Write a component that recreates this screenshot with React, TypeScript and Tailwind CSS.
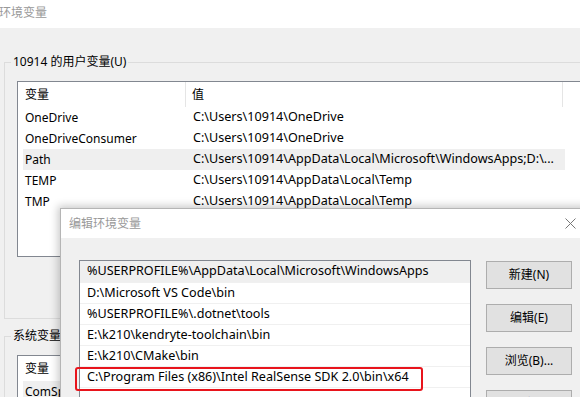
import React from 'react';

const userVars = [
  { name: 'OneDrive', value: 'C:\\Users\\10914\\OneDrive' },
  { name: 'OneDriveConsumer', value: 'C:\\Users\\10914\\OneDrive' },
  { name: 'Path', value: 'C:\\Users\\10914\\AppData\\Local\\Microsoft\\WindowsApps;D:\\...', selected: true },
  { name: 'TEMP', value: 'C:\\Users\\10914\\AppData\\Local\\Temp' },
  { name: 'TMP', value: 'C:\\Users\\10914\\AppData\\Local\\Temp' },
];

const pathItems = [
  '%USERPROFILE%\\AppData\\Local\\Microsoft\\WindowsApps',
  'D:\\Microsoft VS Code\\bin',
  '%USERPROFILE%\\.dotnet\\tools',
  'E:\\k210\\kendryte-toolchain\\bin',
  'E:\\k210\\CMake\\bin',
  'C:\\Program Files (x86)\\Intel RealSense SDK 2.0\\bin\\x64',
  '',
];

const ListHeader = () => (
  <div className="flex h-[25px] items-stretch">
    <div className="flex w-[168px] items-center border-r border-[#e5e5e5] pl-[7px]">变量</div>
    <div className="flex w-[377px] items-center border-r border-[#e5e5e5] pl-[6px]">值</div>
  </div>
);

const GroupBox = ({ label, children, className = '' }: { label: string; children: React.ReactNode; className?: string }) => (
  <fieldset className={`w-[640px] border border-[#dcdcdc] pl-[12px] pt-[11px] ${className}`}>
    <legend className="-ml-[6px] px-[2px] leading-[16px]">{label}</legend>
    {children}
  </fieldset>
);

const Button = ({ children }: { children: React.ReactNode }) => (
  <button className="flex h-[28px] w-[86px] items-center justify-center border border-[#adadad] bg-[#e1e1e1] text-black">
    {children}
  </button>
);

export default function App() {
  return (
    <div className="relative h-[397px] w-[580px] overflow-hidden bg-[#f0f0f0] font-['Noto_Sans','Noto_Sans_CJK_SC',sans-serif] text-[12px] text-black">
      {/* Environment variables window */}
      <div className="flex h-[28px] items-center bg-white pb-[3px] pl-0 -ml-[1px] text-[#999999]">环境变量</div>

      <div className="pl-[4px] pt-[26px]">
        <GroupBox label="10914 的用户变量(U)" className="pb-[61px]">
          <div className="h-[176px] w-[620px] border border-[#828790] bg-white">
            <ListHeader />
            <div className="pl-[5px]">
              {userVars.map((v) => (
                <div key={v.name} className={`flex h-[21px] w-[542px] items-center ${v.selected ? 'bg-[#efefef]' : ''}`}>
                  <div className="w-[170px] pl-[2px]">{v.name}</div>
                  <div className="whitespace-nowrap text-[12.6px]">{v.value}</div>
                </div>
              ))}
            </div>
          </div>
        </GroupBox>

        <GroupBox label="系统变量(S)" className="mt-[9px]">
          <div className="h-[80px] w-[620px] border border-[#828790] bg-white">
            <ListHeader />
            <div className="pl-[5px]">
              <div className="flex h-[21px] w-[542px] items-center bg-[#efefef]">
                <div className="w-[170px] pl-[2px]">ComSpec</div>
                <div className="whitespace-nowrap text-[12.6px]">C:\Windows\system32\cmd.exe</div>
              </div>
            </div>
          </div>
        </GroupBox>
      </div>

      {/* Edit environment variable dialog */}
      <div className="absolute left-[60px] top-[208px] h-[230px] w-[534px] border border-[#b5b5b5] bg-[#f0f0f0] shadow-[0_0_8px_2px_rgba(0,0,0,0.22)]">
        <div className="flex h-[29px] items-center justify-between bg-white pl-[8px] text-[#999999]">
          <span>编辑环境变量</span>
          <span className="flex h-full w-[46px] items-center justify-center">
            <svg width="11" height="11" viewBox="0 0 11 11" stroke="#777" strokeWidth="1" fill="none">
              <path d="M0.5 0.5 L10.5 10.5 M10.5 0.5 L0.5 10.5" />
            </svg>
          </span>
        </div>
        <div className="flex gap-[15px] pl-[18px] pt-[22px]">
          <div className="h-[200px] w-[392px] border border-[#828790] bg-white">
            {pathItems.map((p, i) => (
              <div
                key={i}
                className={`flex h-[21px] items-center whitespace-nowrap pl-[7px] text-[12.6px] ${i === 0 ? 'bg-[#efefef]' : 'border-t border-[#f0f0f0]'}`}
              >
                {p}
              </div>
            ))}
          </div>
          <div className="mt-[1px] flex flex-col gap-[15px]">
            <Button>新建(N)</Button>
            <Button>编辑(E)</Button>
            <Button>浏览(B)...</Button>
            <Button>删除(D)</Button>
          </div>
        </div>
      </div>

      {/* Red highlight annotation */}
      <div className="absolute left-[75px] top-[367px] h-[24px] w-[348px] rounded-[3px] border-2 border-[#e8141c]" />
    </div>
  );
}
